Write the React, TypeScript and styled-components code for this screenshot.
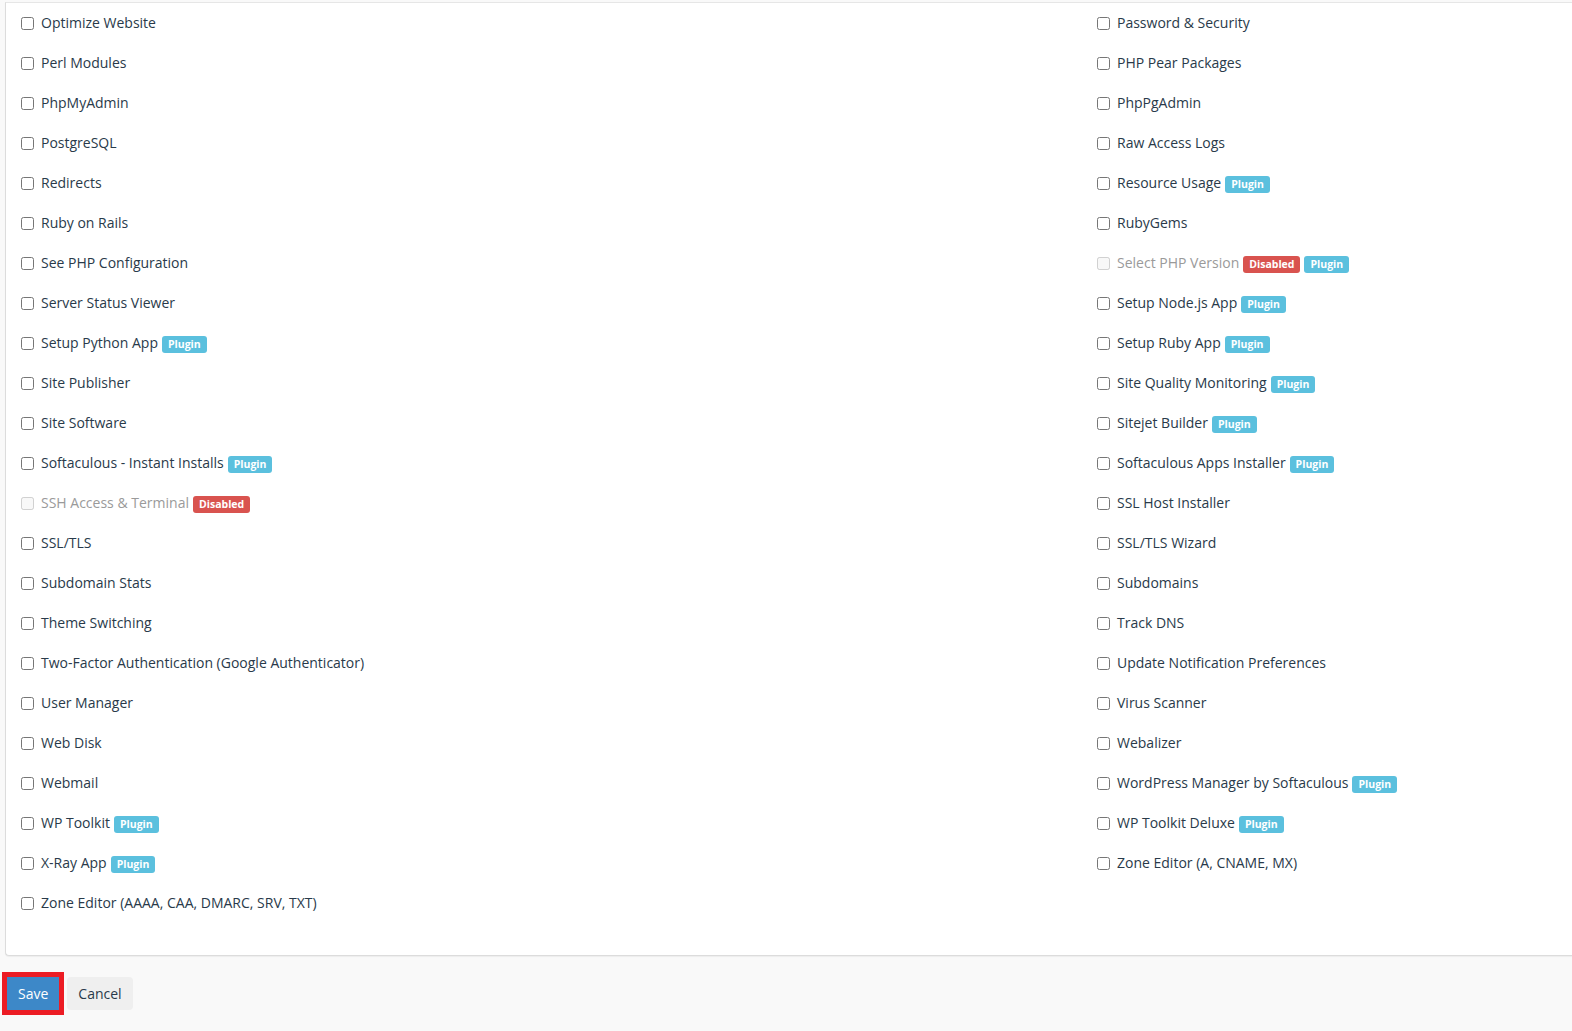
import styled, { createGlobalStyle } from "styled-components";

const GlobalStyle = createGlobalStyle`
  html, body {
    margin: 0;
    padding: 0;
    background: #f9f9f9;
    font-family: "Open Sans", "Liberation Sans", sans-serif;
    font-size: 14px;
    color: #293a4a;
    overflow: hidden;
  }
`;

const Page = styled.div`
  width: 1572px;
  height: 1031px;
  padding-top: 2px;
  box-sizing: border-box;
`;

const Panel = styled.section`
  margin-left: 5px;
  background: #fff;
  border: 1px solid #dcdcdc;
  border-right: none;
  border-top-color: #e6e6e6;
  border-radius: 0 0 0 4px;
  box-shadow: 0 1px 1px rgba(0, 0, 0, 0.05);
  padding: 0 0 32px 15px;
`;

const Grid = styled.div`
  display: grid;
  grid-template-columns: 1076px 1fr;
  grid-auto-rows: 40px;
  align-items: center;
`;

const Item = styled.label<{ $disabled?: boolean }>`
  display: flex;
  align-items: center;
  gap: 7px;
  line-height: 20px;
  white-space: nowrap;
  color: ${(p) => (p.$disabled ? "#9a9a9a" : "#293a4a")};
  cursor: ${(p) => (p.$disabled ? "default" : "pointer")};
`;

const Box = styled.input`
  width: 13px;
  height: 13px;
  margin: 0;
  flex: none;
`;

const Label = styled.span`
  display: inline-flex;
  align-items: center;
  gap: 4px;
`;

const Badge = styled.span<{ $kind: "plugin" | "disabled" }>`
  display: inline-block;
  font-size: 10.5px;
  font-weight: 700;
  line-height: 1;
  padding: 3px 6px 4px;
  border-radius: 3px;
  color: #fff;
  background: ${(p) => (p.$kind === "plugin" ? "#5bc0de" : "#d9534f")};
  margin-top: 3px;
`;

const Actions = styled.div`
  display: flex;
  gap: 8px;
  padding: 21px 0 0 7px;
`;

const Button = styled.button<{ $primary?: boolean }>`
  font-family: inherit;
  font-size: 14px;
  line-height: 20px;
  height: 33px;
  padding: 6px 11px;
  border: none;
  border-radius: ${(p) => (p.$primary ? "0" : "4px")};
  background: ${(p) => (p.$primary ? "#3d88c8" : "#efefef")};
  color: ${(p) => (p.$primary ? "#fff" : "#293a4a")};
  outline: ${(p) => (p.$primary ? "5px solid #ec1c24" : "none")};
  cursor: pointer;
`;

type Feature = { name: string; plugin?: boolean; disabled?: boolean };

const left: Feature[] = [
  { name: "Optimize Website" },
  { name: "Perl Modules" },
  { name: "PhpMyAdmin" },
  { name: "PostgreSQL" },
  { name: "Redirects" },
  { name: "Ruby on Rails" },
  { name: "See PHP Configuration" },
  { name: "Server Status Viewer" },
  { name: "Setup Python App", plugin: true },
  { name: "Site Publisher" },
  { name: "Site Software" },
  { name: "Softaculous - Instant Installs", plugin: true },
  { name: "SSH Access & Terminal", disabled: true },
  { name: "SSL/TLS" },
  { name: "Subdomain Stats" },
  { name: "Theme Switching" },
  { name: "Two-Factor Authentication (Google Authenticator)" },
  { name: "User Manager" },
  { name: "Web Disk" },
  { name: "Webmail" },
  { name: "WP Toolkit", plugin: true },
  { name: "X-Ray App", plugin: true },
  { name: "Zone Editor (AAAA, CAA, DMARC, SRV, TXT)" },
];

const right: Feature[] = [
  { name: "Password & Security" },
  { name: "PHP Pear Packages" },
  { name: "PhpPgAdmin" },
  { name: "Raw Access Logs" },
  { name: "Resource Usage", plugin: true },
  { name: "RubyGems" },
  { name: "Select PHP Version", disabled: true, plugin: true },
  { name: "Setup Node.js App", plugin: true },
  { name: "Setup Ruby App", plugin: true },
  { name: "Site Quality Monitoring", plugin: true },
  { name: "Sitejet Builder", plugin: true },
  { name: "Softaculous Apps Installer", plugin: true },
  { name: "SSL Host Installer" },
  { name: "SSL/TLS Wizard" },
  { name: "Subdomains" },
  { name: "Track DNS" },
  { name: "Update Notification Preferences" },
  { name: "Virus Scanner" },
  { name: "Webalizer" },
  { name: "WordPress Manager by Softaculous", plugin: true },
  { name: "WP Toolkit Deluxe", plugin: true },
  { name: "Zone Editor (A, CNAME, MX)" },
];

function FeatureRow({ f }: { f: Feature }) {
  return (
    <Item $disabled={f.disabled}>
      <Box type="checkbox" disabled={f.disabled} />
      <Label>
        {f.name}
        {f.disabled && <Badge $kind="disabled">Disabled</Badge>}
        {f.plugin && <Badge $kind="plugin">Plugin</Badge>}
      </Label>
    </Item>
  );
}

export default function App() {
  // interleave so the grid fills row by row, like two col-md-6 columns
  const cells: (Feature | null)[] = [];
  for (let i = 0; i < left.length; i++) {
    cells.push(left[i]);
    cells.push(right[i] ?? null);
  }
  return (
    <Page>
      <GlobalStyle />
      <Panel>
        <Grid>
          {cells.map((f, i) =>
            f ? <FeatureRow key={i} f={f} /> : <div key={i} />
          )}
        </Grid>
      </Panel>
      <Actions>
        <Button $primary>Save</Button>
        <Button>Cancel</Button>
      </Actions>
    </Page>
  );
}
